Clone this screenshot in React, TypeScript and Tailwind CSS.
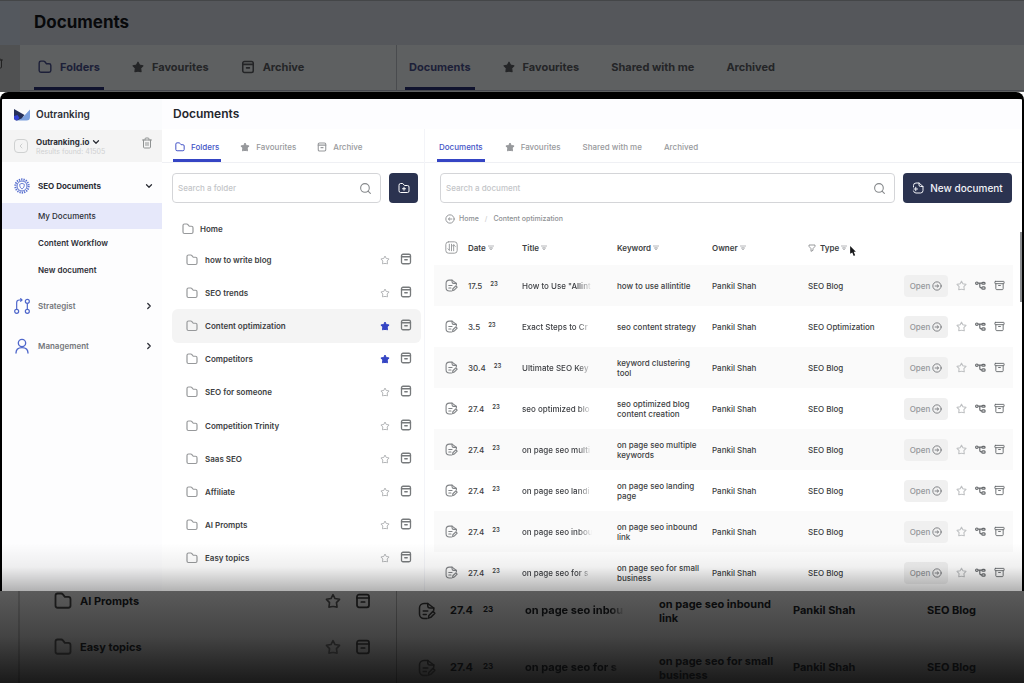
import { useState } from 'react';
import type { ReactNode } from 'react';
import { Archive, ChevronDown, ChevronRight, Search, Trash2 } from 'lucide-react';
import { cx } from 'class-variance-authority';

type IconProps = { className?: string };

const FOLDERS = [
  { name: 'how to write blog', starred: false },
  { name: 'SEO trends', starred: false },
  { name: 'Content optimization', starred: true },
  { name: 'Competitors', starred: true },
  { name: 'SEO for someone', starred: false },
  { name: 'Competition Trinity', starred: false },
  { name: 'Saas SEO', starred: false },
  { name: 'Affiliate', starred: false },
  { name: 'AI Prompts', starred: false },
  { name: 'Easy topics', starred: false },
];

const DOCUMENTS = [
  { date: '17.5', title: 'How to Use "Allint', keyword: 'how to use allintitle', type: 'SEO Blog' },
  { date: '3.5', title: 'Exact Steps to Cr', keyword: 'seo content strategy', type: 'SEO Optimization' },
  { date: '30.4', title: 'Ultimate SEO Key', keyword: 'keyword clustering tool', type: 'SEO Blog' },
  { date: '27.4', title: 'seo optimized blo', keyword: 'seo optimized blog content creation', type: 'SEO Blog' },
  { date: '27.4', title: 'on page seo multi', keyword: 'on page seo multiple keywords', type: 'SEO Blog' },
  { date: '27.4', title: 'on page seo landi', keyword: 'on page seo landing page', type: 'SEO Blog' },
  { date: '27.4', title: 'on page seo inbou', keyword: 'on page seo inbound link', type: 'SEO Blog' },
  { date: '27.4', title: 'on page seo for s', keyword: 'on page seo for small business', type: 'SEO Blog' },
];

// ---- Icons ----
function FolderIcon({ className }: IconProps) {
  return (
    <svg viewBox="0 0 24 24" fill="none" stroke="currentColor" strokeWidth="2.400" strokeLinejoin="round" className={className}>
      <path d="M2 5a3 3 0 0 1 3-3h4.500a3 3 0 0 1 2.300 1.100L14.500 6.500H19a3 3 0 0 1 3 3V18a3 3 0 0 1-3 3H5a3 3 0 0 1-3-3z" />
    </svg>
  );
}

function StarIcon({ className, filled = false }: IconProps & { filled?: boolean }) {
  return (
    <svg viewBox="0 0 24 24" fill={filled ? 'currentColor' : 'none'} stroke="currentColor" strokeWidth="2.400" strokeLinejoin="round" className={className}>
      <path d="M12 2.500l3 5.800 6.800 1.200-4.600 4.900.9 6.800c-2-.6-4-.9-6.100-.9s-4.100.3-6.100.9l.9-6.800L2.200 9.500 9 8.300z" />
    </svg>
  );
}

function BoxIcon({ className }: IconProps) {
  return (
    <svg viewBox="0 0 24 24" fill="none" stroke="currentColor" strokeWidth="2.600" strokeLinecap="round" className={className}>
      <rect x="3" y="2.500" width="18" height="19" rx="3" />
      <path d="M3 7.500h18M9.500 13.500h5" />
    </svg>
  );
}

function DocIcon({ className }: IconProps) {
  return (
    <svg viewBox="0 0 24 24" fill="none" stroke="currentColor" strokeWidth="2" strokeLinecap="round" strokeLinejoin="round" className={className}>
      <path d="M12 22H8a6 6 0 0 1-6-6V8a6 6 0 0 1 6-6h5l8 6v3" />
      <path d="M13 2v3a3 3 0 0 0 3 3h5M7 12h6M7 16.500h4" />
      <path d="M14 21.500l.5-3.500 5.500-5.500 2.500 2.500-5.500 5.500z" />
    </svg>
  );
}

function SortArrow({ className }: IconProps) {
  return (
    <svg viewBox="0 0 12 12" fill="none" stroke="currentColor" strokeWidth="1.600" className={className}>
      <path d="M0 2h12M3 5.500h6L6 10z" />
    </svg>
  );
}

function FunnelIcon({ className }: IconProps) {
  return (
    <svg viewBox="0 0 24 24" fill="none" stroke="currentColor" strokeWidth="2.500" strokeLinejoin="round" className={className}>
      <path d="M3 3h18v4l-6 7v5l-6 3v-8L3 7z" />
    </svg>
  );
}

function ColumnsIcon({ className }: IconProps) {
  return (
    <svg viewBox="0 0 24 24" fill="none" stroke="currentColor" strokeWidth="1.800" strokeLinecap="round" strokeLinejoin="round" className={className}>
      <rect x="1.500" y="1.500" width="21" height="21" rx="5" />
      <path d="M8 6v11M5.500 14.500L8 17M12 6v12M16 18V7M13.500 9.500L16 7l3 3" />
    </svg>
  );
}

function ArrowCircle({ className, back = false }: IconProps & { back?: boolean }) {
  return (
    <svg viewBox="0 0 24 24" fill="none" stroke="currentColor" strokeWidth="2.200" strokeLinecap="round" strokeLinejoin="round" className={className}>
      <circle cx="12" cy="12" r="10" />
      <path d={back ? 'M16.500 12H9M11.500 9L8 12l3.500 3' : 'M7.500 12H15M12.500 9l3.500 3-3.500 3'} />
    </svg>
  );
}

function FlowIcon({ className }: IconProps) {
  return (
    <svg viewBox="0 0 24 20" fill="none" stroke="currentColor" strokeWidth="2.600" className={className}>
      <circle cx="4" cy="5" r="2.700" />
      <rect x="15" y="3" width="7" height="4" rx="2" />
      <rect x="15" y="13" width="7" height="5" rx="2" />
      <path d="M7 5h8M10.500 5v7a3 3 0 0 0 3 3H15" />
    </svg>
  );
}

function AddFolderIcon({ className }: IconProps) {
  return (
    <svg viewBox="0 0 24 24" fill="none" stroke="currentColor" strokeWidth="2" strokeLinecap="round" strokeLinejoin="round" className={className}>
      <path d="M2 6a3 3 0 0 1 3-3h4.500L13 7h6a3 3 0 0 1 3 3v8a3 3 0 0 1-3 3H5a3 3 0 0 1-3-3z" />
      <path d="M12 10.500v6M9 13.500h6" />
    </svg>
  );
}

function AddDocIcon({ className }: IconProps) {
  return (
    <svg viewBox="0 0 24 24" fill="none" stroke="currentColor" strokeWidth="2" strokeLinecap="round" strokeLinejoin="round" className={className}>
      <path d="M3 10V7a5 5 0 0 1 5-5h6l8 7v8a5 5 0 0 1-5 5H8a5 5 0 0 1-5-4" />
      <path d="M14 2v4a3 3 0 0 0 3 3h5M4 14h7M7.500 10.500v7" />
    </svg>
  );
}

function Logo() {
  return (
    <svg viewBox="0 0 32 24" className="h-3 w-4">
      <path d="M32 1v15a7 7 0 0 1-7 7H6l13-8z" fill="#7ba0de" />
      <path d="M0 0l21 12-6 7-9 4a6 6 0 0 1-6-6z" fill="#25305a" />
      <path d="M0 14l7-2 4 6-5 5a6 6 0 0 1-6-6z" fill="#3343d6" />
    </svg>
  );
}

function SeoIcon() {
  return (
    <svg viewBox="0 0 24 24" fill="none" stroke="currentColor" className="size-4">
      <circle cx="12" cy="12" r="10" strokeWidth="3" strokeDasharray="2 1.500" />
      <circle cx="12" cy="12" r="7.500" strokeWidth="1.500" />
      <path d="M8.500 9.500L12 8l3.500 1.500c0 3.500-1 5.500-3.500 7-2.500-1.500-3.500-3.500-3.500-7z" strokeWidth="1.300" />
    </svg>
  );
}

function StrategistIcon() {
  return (
    <svg viewBox="0 0 24 24" fill="none" stroke="currentColor" strokeWidth="1.800" className="size-4">
      <circle cx="4" cy="20" r="3" />
      <circle cx="20" cy="20" r="3" />
      <circle cx="20" cy="5" r="3" />
      <path d="M4 17V7a4 4 0 0 1 4-4h4M9.500.5L12 3 9.500 5.500M20 8v9" />
    </svg>
  );
}

function ManagementIcon() {
  return (
    <svg viewBox="0 0 24 24" fill="none" stroke="currentColor" strokeWidth="2" strokeLinecap="round" className="size-4">
      <circle cx="12" cy="7.500" r="5.500" />
      <path d="M3 22.500c0-5 3.500-8 9-8s9 3 9 8" />
    </svg>
  );
}

// ---- Tabs ----
function Tab({ icon, label, active }: { icon?: ReactNode; label: string; active?: boolean }) {
  return (
    <button
      className={cx(
        'flex h-full items-center gap-1.5 border-b-3 px-0.5 pt-1.5 text-[8px] font-medium whitespace-nowrap',
        active ? 'border-[#3545c4] text-[#4353c6]' : 'border-transparent text-[#97999c]'
      )}
    >
      {icon}
      {label}
    </button>
  );
}

function DimTab({ icon, label, active }: { icon?: ReactNode; label: string; active?: boolean }) {
  return (
    <button
      className={cx(
        'flex h-full items-center gap-2 border-b-3 px-1 pt-0.5 text-[11px] font-bold whitespace-nowrap',
        active ? 'border-[#10132e] text-[#1c1f38]' : 'border-transparent text-[#242527]'
      )}
    >
      {icon}
      {label}
    </button>
  );
}

function TopStrip() {
  return (
    <div className="flex h-[92px] shrink-0 overflow-hidden border-t border-[#444648] bg-[#5e6061] text-[#08090b]">
      <div className="w-5 shrink-0 bg-[#54585e]">
        <div className="h-11" />
        <div className="flex h-12 items-start bg-[#505152] pt-3">
          <Trash2 className="-ml-2 size-3 text-[#222]" />
        </div>
      </div>
      <div className="min-w-0 flex-1">
        <h2 className="flex h-11 items-center bg-[#55575b] pl-[14px] text-[17px] font-bold">Documents</h2>
        <div className="flex h-[46px] border-b border-[#46484e]">
          <div className="flex w-[377px] shrink-0 gap-6 border-r border-[#494b4e] pl-[14px]">
            <DimTab active icon={<FolderIcon className="size-[14px]" />} label="Folders" />
            <DimTab icon={<StarIcon filled className="size-3" />} label="Favourites" />
            <DimTab icon={<BoxIcon className="size-[14px]" />} label="Archive" />
          </div>
          <div className="flex gap-6 pl-2">
            <DimTab active label="Documents" />
            <DimTab icon={<StarIcon filled className="size-3" />} label="Favourites" />
            <DimTab label="Shared with me" />
            <DimTab label="Archived" />
          </div>
        </div>
      </div>
    </div>
  );
}

function BottomStrip() {
  return (
    <div className="flex h-[92px] shrink-0 overflow-hidden bg-linear-to-b from-[#5b5b5b] via-[#434343] to-[#1a1a1a] text-[#0b0c0d]">
      <div className="w-5 shrink-0 border-r-2 border-black/15" />
      <ul className="flex w-[377px] shrink-0 flex-col gap-[26px] border-r border-black/25 pr-[25px] pl-[34px]">
        {['AI Prompts', 'Easy topics'].map(name => (
          <li key={name} className="flex h-5 items-center text-[11px] font-bold">
            <FolderIcon className="mr-2 size-[18px] text-[#1a1a1a]" />
            {name}
            <StarIcon className="mr-[14px] ml-auto size-4 text-[#202020]" />
            <BoxIcon className="size-4 text-[#151515]" />
          </li>
        ))}
      </ul>
      <ul className="flex min-w-0 flex-1 flex-col gap-[18px] pl-[21px]">
        {DOCUMENTS.slice(6).map(doc => (
          <li key={doc.keyword} className="flex h-[39px] shrink-0 items-center text-[11px] font-bold">
            <DocIcon className="mr-[14px] size-[18px] shrink-0 text-[#151515]" />
            <span className="flex w-[75px] shrink-0 items-center gap-2.5">
              {doc.date} <sup className="top-0 mb-1 text-[8px]">23</sup>
            </span>
            <span className="mr-[34px] w-[100px] shrink-0 whitespace-nowrap [mask-image:linear-gradient(to_right,black_85%,transparent)]">
              {doc.title}
            </span>
            <span className="mr-1 w-[130px] shrink-0 leading-[14px]">{doc.keyword}</span>
            <span className="w-[134px] shrink-0">Pankil Shah</span>
            <span className="whitespace-nowrap">{doc.type}</span>
          </li>
        ))}
      </ul>
    </div>
  );
}

function Sidebar() {
  return (
    <aside className="w-40 shrink-0 bg-[#fdfdfe] text-[8px] text-[#2c2e36]">
      <div className="flex h-[31px] items-center gap-1.5 bg-[#fafbfd] pl-3 text-[10px] font-semibold">
        <Logo />
        Outranking
      </div>
      <div className="flex h-8 items-center bg-[#f4f4f4] pr-[9px] pl-3">
        <button aria-label="Collapse menu" className="mr-2 flex size-[14px] items-center justify-center rounded-sm border border-[#cfd1d1] text-[#b9bcbc]">
          <ChevronRight className="size-2 rotate-180" />
        </button>
        <div className="pt-0.5 leading-[10px]">
          <button className="flex items-center gap-0.5 font-bold">
            Outranking.io <ChevronDown className="size-2.5" strokeWidth={3} />
          </button>
          <p className="text-[7px] text-[#d0d1d2]">Results found: 41505</p>
        </div>
        <button aria-label="Delete" className="mb-1.5 ml-auto text-[#8f9292]">
          <Trash2 className="size-3" />
        </button>
      </div>
      <nav>
        <button className="mt-[7px] flex h-[34px] w-full items-center pr-2 pl-3 font-bold">
          <span className="mr-2 text-[#5a71cf]"><SeoIcon /></span>
          SEO Documents
          <ChevronDown className="ml-auto size-2.5" strokeWidth={3} />
        </button>
        <a href="#my-documents" className="flex h-[26px] items-center bg-[#e6e8fa] pl-9 font-medium">My Documents</a>
        <a href="#content-workflow" className="flex h-[27px] items-center pl-9 font-semibold">Content Workflow</a>
        <a href="#new-document" className="flex h-[27px] items-center pl-9 font-semibold">New document</a>
        <button className="mt-[3px] flex h-10 w-full items-center pr-2 pl-3 font-semibold text-[#74777b]">
          <span className="mr-2 text-[#4f67cb]"><StrategistIcon /></span>
          Strategist
          <ChevronRight className="ml-auto size-2.5 text-[#2c2e36]" strokeWidth={3} />
        </button>
        <button className="flex h-10 w-full items-center pr-2 pl-3 font-semibold text-[#74777b]">
          <span className="mr-2 text-[#4f67cb]"><ManagementIcon /></span>
          Management
          <ChevronRight className="ml-auto size-2.5 text-[#2c2e36]" strokeWidth={3} />
        </button>
      </nav>
    </aside>
  );
}

function SearchBox({ label, value, onChange }: { label: string; value: string; onChange: (v: string) => void }) {
  return (
    <label className="flex h-[30px] min-w-0 flex-1 items-center rounded border border-[#d4d5d8] bg-white pr-2 pl-[5px]">
      <input
        type="text"
        aria-label={label}
        placeholder={label}
        value={value}
        onChange={e => onChange(e.target.value)}
        className="min-w-0 flex-1 text-[8px] font-medium outline-none placeholder:text-[#c3c5c8]"
      />
      <Search className="size-[13px] text-[#85888b]" />
    </label>
  );
}

function FoldersColumn() {
  const [query, setQuery] = useState('');
  const [selected, setSelected] = useState('Content optimization');

  return (
    <section className="flex w-[263px] shrink-0 flex-col border-r border-[#f3f4f8]">
      <div className="flex h-[34px] shrink-0 gap-[17px] border-b border-[#eff0f4] pl-[11px]">
        <Tab active icon={<FolderIcon className="size-2.5" />} label="Folders" />
        <Tab icon={<StarIcon filled className="size-2.5" />} label="Favourites" />
        <Tab icon={<BoxIcon className="size-2.5" />} label="Archive" />
      </div>
      <div className="flex gap-2 pt-2.5 pr-1.5 pl-[10px]">
        <SearchBox label="Search a folder" value={query} onChange={setQuery} />
        <button aria-label="New folder" className="flex w-[29px] items-center justify-center rounded bg-[#2b3350] text-white">
          <AddFolderIcon className="size-3" />
        </button>
      </div>
      <div className="mt-3 flex h-7 items-center gap-1.5 pl-5 text-[8px] font-semibold text-[#3c3e42]">
        <FolderIcon className="size-3 text-[#97999b]" />
        Home
      </div>
      <ul className="grid flex-1 auto-rows-fr pr-[3px] pb-4 pl-[10px]">
        {FOLDERS.filter(f => f.name.toLowerCase().includes(query.toLowerCase())).map(folder => (
          <li
            key={folder.name}
            className={cx('flex items-center rounded-md pr-[9px] pl-[14px]', folder.name === selected && 'bg-[#f4f4f4]')}
          >
            <button
              onClick={() => setSelected(folder.name)}
              className="flex flex-1 items-center gap-[7px] text-left text-[8px] font-semibold text-[#3c3e42]"
            >
              <FolderIcon className="size-3 text-[#97999b]" />
              {folder.name}
            </button>
            <button aria-label="Favourite" className={cx('mr-2.5', folder.starred ? 'text-[#3545c4]' : 'text-[#b4b6b8]')}>
              <StarIcon filled={folder.starred} className="size-2.5" />
            </button>
            <button aria-label="Archive" className="mb-0.5 text-[#777a7c]">
              <BoxIcon className="size-3" />
            </button>
          </li>
        ))}
      </ul>
    </section>
  );
}

function HeadCell({ label, icon }: { label: string; icon?: ReactNode }) {
  return (
    <th scope="col" className="p-0 text-left font-semibold">
      <button className="flex items-center gap-1">
        {icon}
        {label}
        <SortArrow className="-ml-0.5 size-1.5 text-[#a3a5a8]" />
      </button>
    </th>
  );
}

function DocumentsColumn() {
  const [query, setQuery] = useState('');

  return (
    <section className="flex min-w-0 flex-1 flex-col">
      <div className="flex h-[34px] shrink-0 gap-[18px] border-b border-[#eff0f4] pl-3">
        <Tab active label="Documents" />
        <Tab icon={<StarIcon filled className="size-2.5" />} label="Favourites" />
        <Tab label="Shared with me" />
        <Tab label="Archived" />
      </div>
      <div className="flex shrink-0 gap-2 pt-2.5 pr-[10px] pl-[15px]">
        <SearchBox label="Search a document" value={query} onChange={setQuery} />
        <button className="flex w-[109px] items-center justify-center gap-1.5 rounded bg-[#2b3350] text-[10px] font-medium whitespace-nowrap text-[#f1f2f6]">
          <AddDocIcon className="size-3" />
          New document
        </button>
      </div>
      <div className="mt-2.5 flex h-3 shrink-0 items-center gap-1 pl-5 text-[7px] font-medium text-[#8e9194]">
        <ArrowCircle back className="size-2.5" />
        <a href="#home">Home</a>
        <span className="px-0.5 text-[#d0d0d0]">/</span>
        <a href="#content-optimization">Content optimization</a>
      </div>
      <div className="mt-[5px] pr-[10px] pl-[9px]">
        <table className="w-full table-fixed text-[8px] text-[#3c3e42]">
          <colgroup>
            <col className="w-[34px]" />
            <col className="w-[54px]" />
            <col className="w-[95px]" />
            <col className="w-[95px]" />
            <col className="w-[96px]" />
            <col className="w-[96px]" />
            <col className="w-[109px]" />
          </colgroup>
          <thead>
            <tr className="h-[35px]">
              <th scope="col" className="p-0 pl-[11px]">
                <ColumnsIcon className="size-[13px] text-[#999b9d]" />
              </th>
              <HeadCell label="Date" />
              <HeadCell label="Title" />
              <HeadCell label="Keyword" />
              <HeadCell label="Owner" />
              <HeadCell label="Type" icon={<FunnelIcon className="size-2 text-[#85878a]" />} />
              <th scope="col" aria-label="Actions" />
            </tr>
          </thead>
          <tbody>
            {DOCUMENTS.filter(d => d.keyword.includes(query.toLowerCase())).map(doc => (
              <tr key={doc.keyword} className="h-[41px] font-medium odd:bg-[#fafafa]">
                <td className="p-0 pl-[11px]">
                  <DocIcon className="size-[13px] text-[#808386]" />
                </td>
                <td className="p-0">
                  <div className="flex items-center gap-2">
                    {doc.date} <sup className="top-0 mb-1 text-[6px] font-semibold">23</sup>
                  </div>
                </td>
                <td className="p-0">
                  <div className="w-[70px] whitespace-nowrap [mask-image:linear-gradient(to_right,black_80%,transparent)]">
                    {doc.title}
                  </div>
                </td>
                <td className="p-0 pr-2 leading-[10px]">{doc.keyword}</td>
                <td className="p-0">Pankil Shah</td>
                <td className="p-0 whitespace-nowrap">{doc.type}</td>
                <td className="p-0">
                  <div className="flex items-center">
                    <button className="mr-2 flex h-[22px] w-11 items-center justify-center gap-0.5 rounded bg-[#f0f0f0] text-[#94979a]">
                      Open <ArrowCircle className="size-2.5 text-[#777a7d]" />
                    </button>
                    <button aria-label="Favourite" className="mr-2 text-[#bfc1c3]"><StarIcon className="size-[11px]" /></button>
                    <button aria-label="Workflow" className="mr-2 text-[#66696c]"><FlowIcon className="size-[11px]" /></button>
                    <button aria-label="Archive" className="text-[#66696c]"><Archive className="size-[11px]" /></button>
                  </div>
                </td>
              </tr>
            ))}
          </tbody>
        </table>
      </div>
    </section>
  );
}

export default function App() {
  return (
    <div className="flex h-screen flex-col overflow-hidden bg-white font-['Inter','Liberation_Sans',sans-serif]">
      <TopStrip />

      <main className="relative min-h-0 flex-1 overflow-hidden rounded-t-lg border-x-2 border-t-[7px] border-black bg-white">
        <div className="flex h-full">
          <Sidebar />
          <div className="flex min-w-0 flex-1 flex-col">
            <h1 className="flex h-[30px] shrink-0 items-center bg-[#fdfdff] pl-[11px] text-[12px] font-semibold text-[#24262d]">
              Documents
            </h1>
            <div className="flex min-h-0 flex-1">
              <FoldersColumn />
              <DocumentsColumn />
            </div>
          </div>
        </div>

        {/* scroll thumb, pointer and fade lie over the panel */}
        <div className="absolute top-[133px] right-0 h-[70px] w-0.5 bg-[#8d8f92]" />
        <svg viewBox="0 0 10 14" className="absolute top-[147px] left-[847px] h-2.5 w-2">
          <path d="M1 0l8 8H6l2 5-2 1-2-5-3 2z" fill="#17181a" />
        </svg>
        <div className="pointer-events-none absolute inset-x-0 bottom-0 h-12 bg-linear-to-b from-transparent via-black/6 to-black/30" />
      </main>

      <BottomStrip />
    </div>
  );
}
